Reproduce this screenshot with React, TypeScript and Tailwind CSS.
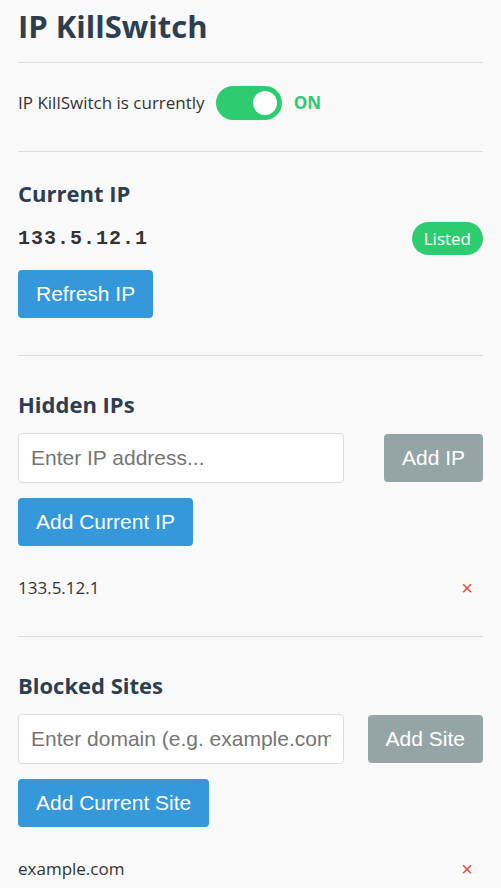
import React, { useState } from 'react';

const body = { fontFamily: '"Open Sans", "Noto Sans", sans-serif' };
const btnFont = { fontFamily: '"Liberation Sans", Arial, sans-serif' };

const Divider = () => <div className="h-px bg-[#dddddd] w-full" />;

const RemoveRow: React.FC<{ label: string }> = ({ label }) => (
  <div className="flex items-center justify-between h-[40px] mt-[22px]">
    <span className="text-[17px] text-[#333]">{label}</span>
    <button className="text-[#e74c3c] text-[20px] pr-[10px] leading-none" style={btnFont}>×</button>
  </div>
);

const App: React.FC = () => {
  const [on, setOn] = useState(true);
  const [ip, setIp] = useState('');
  const [site, setSite] = useState('');

  return (
    <div className="min-h-screen bg-[#f9f9f9] px-[18px] text-[#2c3e50]" style={body}>
      <h1 className="text-[31px] font-bold leading-[40px] pt-[6px] pb-[16px]">IP KillSwitch</h1>
      <Divider />

      <div className="flex items-center pt-[23px] pb-[31px]">
        <span className="text-[17px] text-[#333]">IP KillSwitch is currently</span>
        <button
          onClick={() => setOn(!on)}
          className="ml-[11px] w-[66px] h-[34px] rounded-full bg-[#2ecc71] flex items-center justify-end px-[5px]"
        >
          <span className="w-[24px] h-[24px] rounded-full bg-white" />
        </button>
        <span className="ml-[12px] text-[17px] font-bold text-[#2ecc71]">{on ? 'ON' : 'OFF'}</span>
      </div>
      <Divider />

      <h2 className="text-[22px] font-bold leading-[30px] mt-[26px]">Current IP</h2>
      <div className="flex items-center justify-between mt-[14px]">
        <span className="text-[20px] font-bold text-[#333] tracking-[1px]" style={{ fontFamily: '"Liberation Mono", monospace' }}>
          133.5.12.1
        </span>
        <span className="bg-[#2ecc71] text-white rounded-full px-[12px] h-[33px] flex items-center text-[17px]">Listed</span>
      </div>
      <button className="mt-[15px] h-[48px] px-[18px] rounded-[4px] bg-[#3498db] text-white text-[21px]" style={btnFont}>
        Refresh IP
      </button>
      <div className="mt-[37px]">
        <Divider />
      </div>

      <h2 className="text-[22px] font-bold leading-[30px] mt-[33px]">Hidden IPs</h2>
      <div className="flex items-center justify-between mt-[14px]">
        <input
          value={ip}
          onChange={(e) => setIp(e.target.value)}
          placeholder="Enter IP address..."
          className="w-[70%] h-[50px] border border-[#ddd] rounded-[4px] bg-white px-[12px] text-[21px] placeholder:text-[#757575] outline-none"
          style={btnFont}
        />
        <button className="h-[48px] px-[18px] rounded-[4px] bg-[#95a5a6] text-white text-[21px]" style={btnFont}>
          Add IP
        </button>
      </div>
      <button className="mt-[15px] h-[48px] px-[18px] rounded-[4px] bg-[#3498db] text-white text-[21px]" style={btnFont}>
        Add Current IP
      </button>
      <RemoveRow label="133.5.12.1" />
      <div className="mt-[28px]">
        <Divider />
      </div>

      <h2 className="text-[22px] font-bold leading-[30px] mt-[33px]">Blocked Sites</h2>
      <div className="flex items-center justify-between mt-[14px]">
        <input
          value={site}
          onChange={(e) => setSite(e.target.value)}
          placeholder="Enter domain (e.g. example.com)"
          className="w-[70%] h-[50px] border border-[#ddd] rounded-[4px] bg-white px-[12px] text-[21px] placeholder:text-[#757575] outline-none"
          style={btnFont}
        />
        <button className="h-[48px] px-[18px] rounded-[4px] bg-[#95a5a6] text-white text-[21px]" style={btnFont}>
          Add Site
        </button>
      </div>
      <button className="mt-[15px] h-[48px] px-[18px] rounded-[4px] bg-[#3498db] text-white text-[21px]" style={btnFont}>
        Add Current Site
      </button>
      <RemoveRow label="example.com" />
    </div>
  );
};

export default App;
